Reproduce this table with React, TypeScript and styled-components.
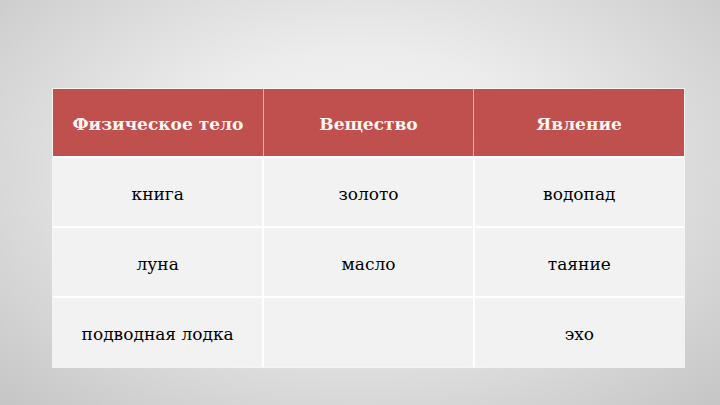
import React from "react";
import styled, { createGlobalStyle } from "styled-components";

const GlobalStyle = createGlobalStyle`
  html, body {
    margin: 0;
    padding: 0;
    width: 720px;
    height: 405px;
    overflow: hidden;
  }
`;

const Slide = styled.div`
  width: 720px;
  height: 405px;
  box-sizing: border-box;
  padding: 89px 36px 0 53px;
  background: radial-gradient(
    ellipse 75% 85% at 50% 42%,
    #f6f6f6 0%,
    #ececec 35%,
    #d6d6d6 70%,
    #c2c2c2 100%
  );
`;

const Table = styled.table`
  width: 631px;
  border-collapse: collapse;
  table-layout: fixed;
  box-shadow: 0 0 0 1px rgba(255, 255, 255, 0.7);
  font-family: "DejaVu Serif", "Liberation Serif", serif;
`;

const HeadCell = styled.th`
  height: 68px;
  padding: 2px 8px 0;
  box-sizing: border-box;
  background: #c0504d;
  color: #fff6f4;
  font-family: "DejaVu Serif", "Liberation Serif", serif;
  font-size: 17px;
  font-weight: bold;
  text-align: center;
  border-left: 1px solid #e6b0ae;
  border-bottom: 2px solid #ffffff;

  &:first-child {
    border-left: none;
  }
`;

const Cell = styled.td`
  height: 70px;
  padding: 3px 8px 0;
  box-sizing: border-box;
  background: #f2f2f2;
  color: #000000;
  font-family: "DejaVu Serif", "Liberation Serif", serif;
  font-size: 17px;
  text-align: center;
  border-left: 2px solid #ffffff;
  border-top: 2px solid #ffffff;

  &:first-child {
    border-left: none;
  }
`;

const header = ["Физическое тело", "Вещество", "Явление"];

const rows = [
  ["книга", "золото", "водопад"],
  ["луна", "масло", "таяние"],
  ["подводная лодка", "", "эхо"],
];

export default function App() {
  return (
    <>
      <GlobalStyle />
      <Slide>
        <Table>
          <thead>
            <tr>
              {header.map((h) => (
                <HeadCell key={h}>{h}</HeadCell>
              ))}
            </tr>
          </thead>
          <tbody>
            {rows.map((row, i) => (
              <tr key={i}>
                {row.map((c, j) => (
                  <Cell key={j}>{c}</Cell>
                ))}
              </tr>
            ))}
          </tbody>
        </Table>
      </Slide>
    </>
  );
}
